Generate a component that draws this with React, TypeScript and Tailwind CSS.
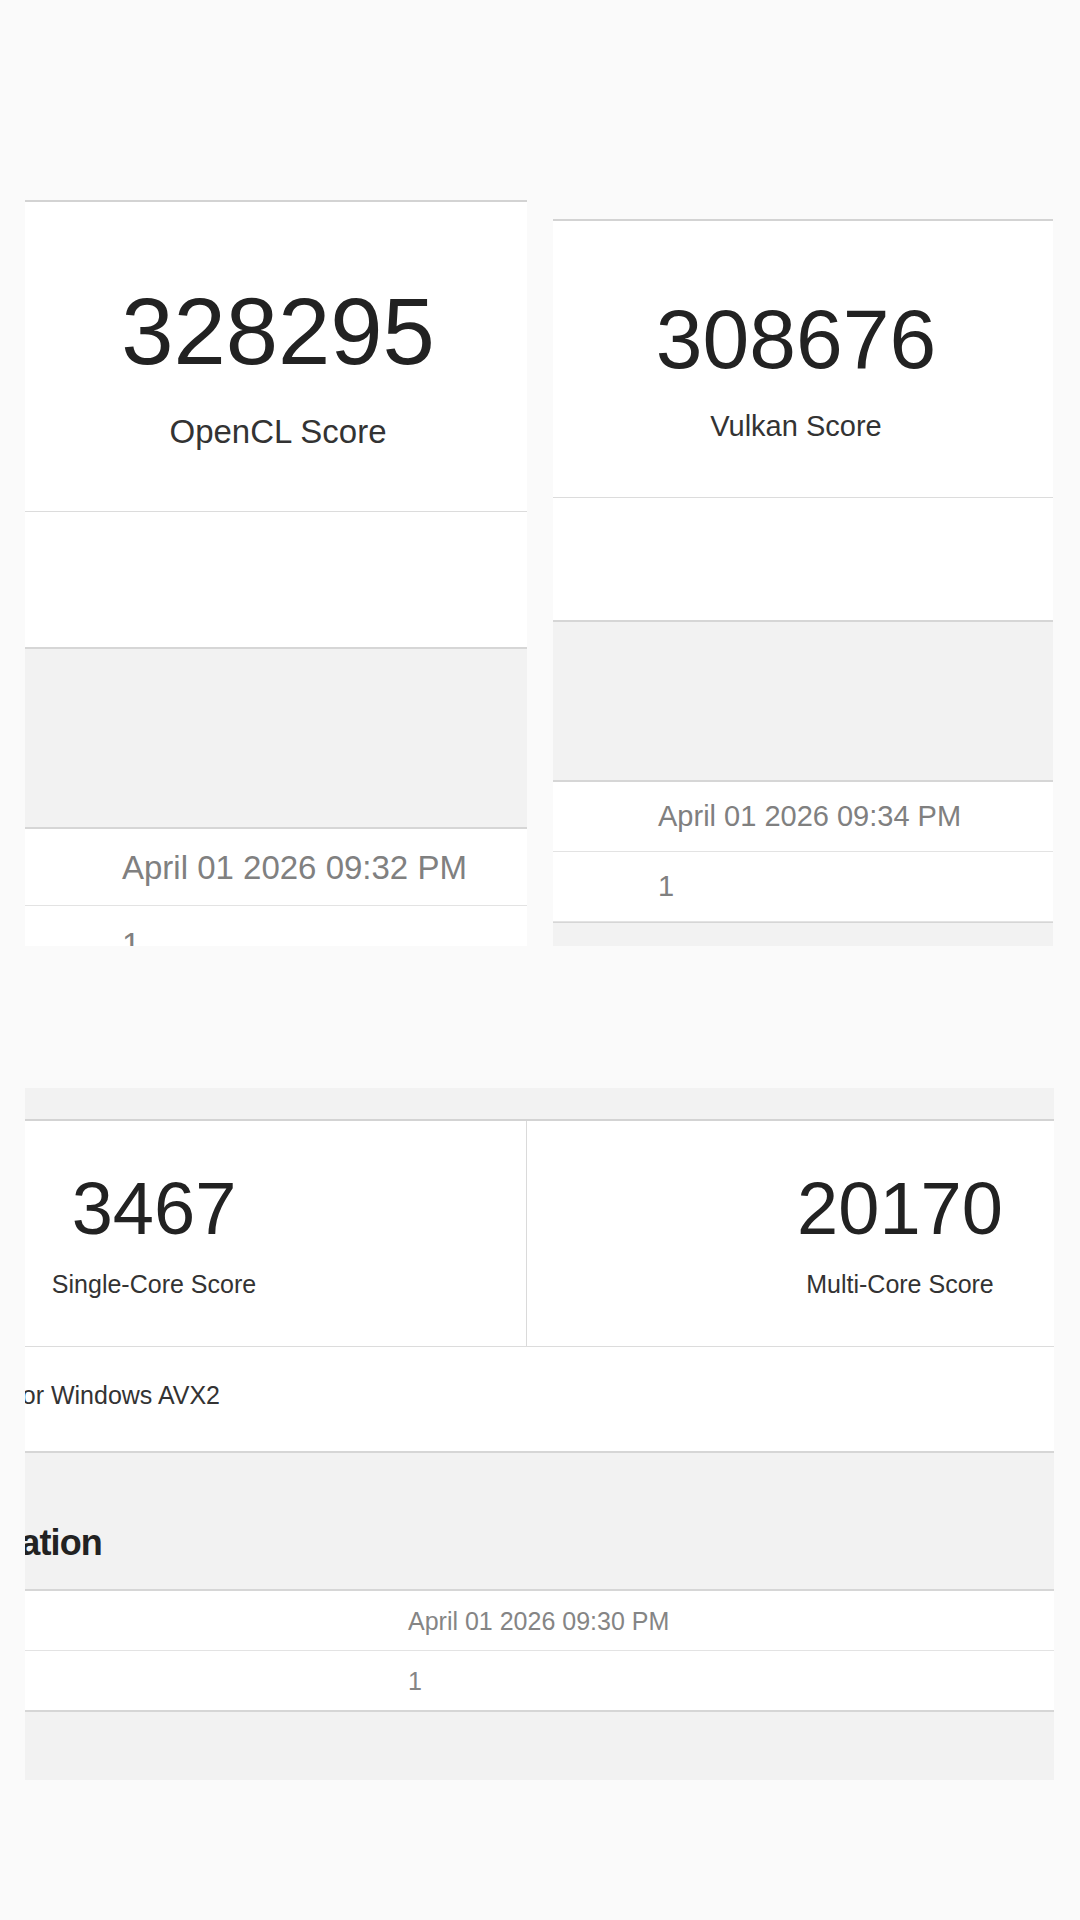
import React from "react"

// ─────────────────────────────────────────────────────────────
// Small building blocks
// ─────────────────────────────────────────────────────────────

function ValueRow({ value, pad, className }: { value: string; pad: string; className: string }) {
  return (
    <div className={`border-b border-[#e3e3e3] ${pad}`}>
      <div className={className}>{value}</div>
    </div>
  )
}

function GrayBand({ className }: { className: string }) {
  return <div className={`border-y-2 border-[#d6d6d6] bg-[#f2f2f2] ${className}`} />
}

// ─────────────────────────────────────────────────────────────
// Top cards: OpenCL + Vulkan
// ─────────────────────────────────────────────────────────────

function OpenCLCard() {
  return (
    <div className="w-[502px] h-[746px] shrink-0 overflow-hidden bg-white border-t-2 border-[#d3d3d3]">
      <div className="flex flex-col items-center pl-[4px] pt-[83px] pb-[63px] border-b border-[#dcdcdc]">
        <div className="text-[94px] leading-none text-[#222]">328295</div>
        <div className="mt-[36px] text-[33px] leading-none text-[#333]">OpenCL Score</div>
      </div>
      <div className="h-[135px]" />
      <GrayBand className="h-[182px]" />
      <ValueRow value="April 01 2026 09:32 PM" pad="pl-[97px] pt-[22px] pb-[21px]" className="text-[33px] leading-none text-[#808080]" />
      <ValueRow value="1" pad="pl-[97px] pt-[22px] pb-[21px]" className="text-[33px] leading-none text-[#808080]" />
    </div>
  )
}

function VulkanCard() {
  return (
    <div className="mt-[19px] w-[500px] h-[727px] shrink-0 overflow-hidden bg-white border-t-2 border-[#d3d3d3]">
      <div className="flex flex-col items-center pr-[14px] pt-[76px] pb-[56px] border-b border-[#dcdcdc]">
        <div className="text-[84px] leading-none text-[#222]">308676</div>
        <div className="mt-[31px] text-[29px] leading-none text-[#333]">Vulkan Score</div>
      </div>
      <div className="h-[122px]" />
      <GrayBand className="h-[162px]" />
      <ValueRow value="April 01 2026 09:34 PM" pad="pl-[105px] pt-[20px] pb-[20px]" className="text-[29px] leading-none text-[#808080]" />
      <ValueRow value="1" pad="pl-[105px] pt-[20px] pb-[20px]" className="text-[29px] leading-none text-[#808080]" />
      <div className="h-[60px] border-t border-[#d6d6d6] bg-[#f2f2f2]" />
    </div>
  )
}

// ─────────────────────────────────────────────────────────────
// CPU result panel (scrolled sideways, so it's clipped left and right)
// ─────────────────────────────────────────────────────────────

function ScoreBox({ score, label, divider }: { score: string; label: string; divider?: boolean }) {
  return (
    <div
      className={`flex flex-col items-center pt-[51px] pb-[49px] ${
        divider ? "w-[745px] border-r border-[#dadada]" : "w-[746px]"
      }`}
    >
      <div className="text-[74px] leading-none text-[#222]">{score}</div>
      <div className="mt-[26px] text-[25px] leading-none text-[#333]">{label}</div>
    </div>
  )
}

function CpuPanel() {
  return (
    <div className="mt-[142px] w-[1029px] overflow-hidden bg-white">
      <div className="h-[33px] bg-[#f2f2f2] border-b-2 border-[#d3d3d3]" />
      <div className="-ml-[243px] w-[1492px]">
        <div className="flex border-b border-[#dcdcdc]">
          <ScoreBox score="3467" label="Single-Core Score" divider />
          <ScoreBox score="20170" label="Multi-Core Score" />
        </div>

        <div className="h-[104px] pt-[36px]">
          <div className="w-[438px] text-right whitespace-nowrap text-[25px] leading-none text-[#333]">
            Geekbench 6.5.0 for Windows AVX2
          </div>
        </div>

        <div className="h-[140px] border-y-2 border-[#d6d6d6] bg-[#f2f2f2] pt-[72px]">
          <div className="w-[318px] text-right whitespace-nowrap text-[36px] leading-none font-bold tracking-tight text-[#222]">
            System Information
          </div>
        </div>

        <ValueRow value="April 01 2026 09:30 PM" pad="pl-[626px] pt-[18px] pb-[16px]" className="text-[25px] leading-none text-[#858585]" />
        <div className="pl-[626px] pt-[18px] pb-[16px] border-b-2 border-[#d6d6d6]">
          <div className="text-[25px] leading-none text-[#858585]">1</div>
        </div>
        <div className="h-[68px] bg-[#f2f2f2]" />
      </div>
    </div>
  )
}

export default function App() {
  return (
    <div
      className="w-[1080px] h-[1920px] bg-[#fafafa] pt-[200px] pl-[25px]"
      style={{ fontFamily: '"Liberation Sans", Arial, sans-serif' }}
    >
      <div className="flex items-start gap-[26px]">
        <OpenCLCard />
        <VulkanCard />
      </div>
      <CpuPanel />
    </div>
  )
}
